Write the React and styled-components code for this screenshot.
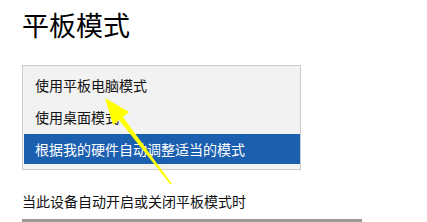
import React from "react";
import styled, { createGlobalStyle } from "styled-components";

const GlobalStyle = createGlobalStyle`
  html, body {
    margin: 0;
    padding: 0;
    background: #ffffff;
  }
  body {
    font-family: "Noto Sans CJK SC", "Noto Sans", sans-serif;
    color: #000000;
  }
`;

const Page = styled.div`
  position: relative;
  width: 427px;
  height: 222px;
  overflow: hidden;
  padding-left: 22px;
  box-sizing: border-box;
  display: flex;
  flex-direction: column;
`;

const Title = styled.h1`
  margin: 7px 0 0 0;
  font-size: 27px;
  font-weight: 400;
  line-height: 36px;
`;

const Dropdown = styled.ul`
  list-style: none;
  margin: 22px 0 0 0;
  padding: 4px 0 5px 0;
  width: 279px;
  box-sizing: border-box;
  background: #f2f2f2;
  border: 1px solid #cccccc;
  display: flex;
  flex-direction: column;
  gap: 2px;
`;

const Option = styled.li`
  height: 30px;
  line-height: 30px;
  padding-left: 11px;
  margin: 0 0 0 1px;
  font-size: 14px;
  color: ${(p) => (p.selected ? "#ffffff" : "#111111")};
  background: ${(p) => (p.selected ? "#1b60b0" : "transparent")};
`;

const Label = styled.div`
  margin-top: 21px;
  font-size: 14px;
  line-height: 20px;
  color: #111111;
`;

const Bar = styled.div`
  margin-top: 8px;
  width: 340px;
  height: 3px;
  flex-shrink: 0;
  background: #9a9a9a;
`;

const Arrow = styled.svg`
  position: absolute;
  left: 0;
  top: 0;
  pointer-events: none;
`;

export default function App() {
  return (
    <>
      <GlobalStyle />
      <Page>
        <Title>平板模式</Title>
        <Dropdown>
          <Option>使用平板电脑模式</Option>
          <Option>使用桌面模式</Option>
          <Option selected>根据我的硬件自动调整适当的模式</Option>
        </Dropdown>
        <Label>当此设备自动开启或关闭平板模式时</Label>
        <Bar />
        <Arrow width="427" height="222" viewBox="0 0 427 222">
          <polygon
            points="105,98 129,112 123,117 172,184 170,184 119,120 113,125"
            fill="#ffff00"
          />
        </Arrow>
      </Page>
    </>
  );
}
